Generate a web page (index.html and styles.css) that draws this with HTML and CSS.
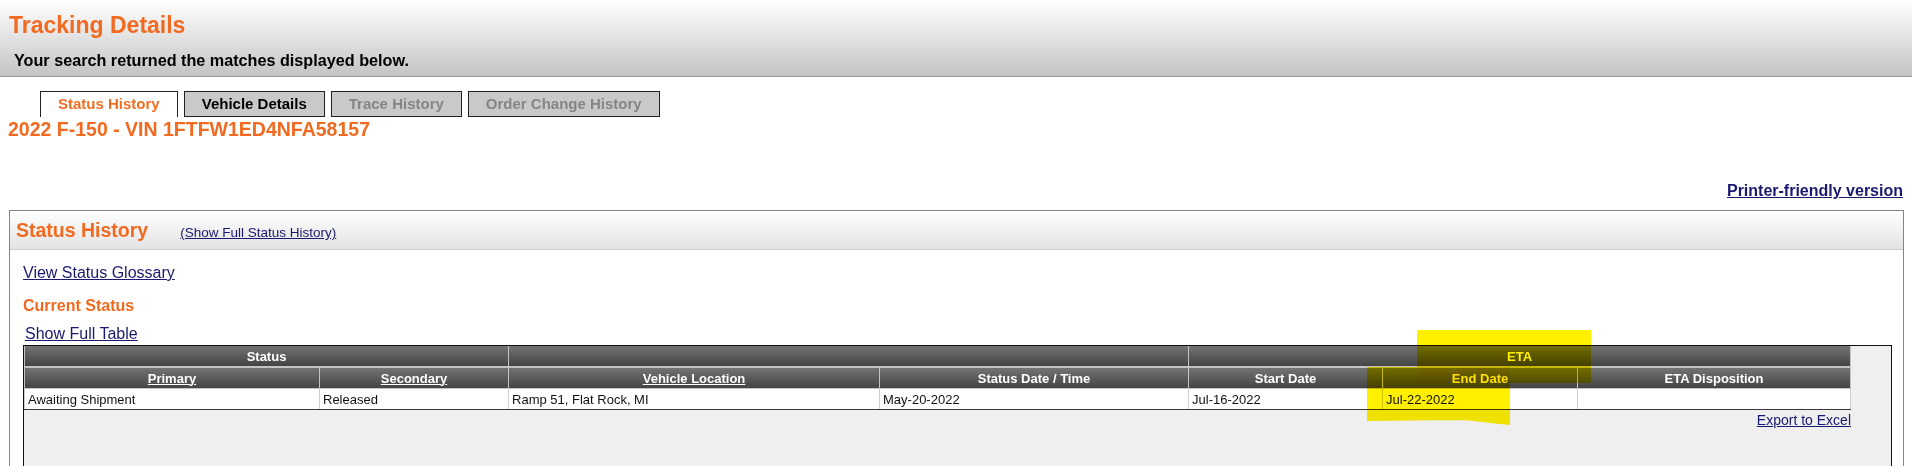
FILE: index.html
```html
<!DOCTYPE html>
<html lang="en">
<head>
<meta charset="UTF-8" />
<title>Tracking Details</title>
<link rel="stylesheet" href="styles.css">
</head>
<body>
<div class="page-head">
<h1 class="page-title">Tracking Details</h1>
<p class="page-sub">Your search returned the matches displayed below.</p>
</div>

<div class="tabs">
<a class="tab tab-active" href="#">Status History</a>
<a class="tab" href="#">Vehicle Details</a>
<a class="tab tab-off" href="#">Trace History</a>
<a class="tab tab-off" href="#">Order Change History</a>
</div>

<h2 class="vin">2022 F-150 - VIN 1FTFW1ED4NFA58157</h2>

<div class="print-row"><a href="#">Printer-friendly version</a></div>

<div class="panel">
<div class="panel-head">
<span class="panel-title">Status History</span>
<a class="panel-link" href="#">(Show Full Status History)</a>
</div>
<div class="panel-body">
<a class="glossary" href="#">View Status Glossary</a>
<h3 class="current">Current Status</h3>
<a class="show-full" href="#">Show Full Table</a>

<div class="grid-wrap">
<table class="status-table">
<colgroup>
<col style="width:295px">
<col style="width:189px">
<col style="width:371px">
<col style="width:309px">
<col style="width:194px">
<col style="width:195px">
<col style="width:273px">
</colgroup>
<thead>
<tr class="group-row">
<th colspan="2">Status</th>
<th colspan="2"></th>
<th colspan="3">ETA</th>
</tr>
<tr class="col-row">
<th><a href="#">Primary</a></th>
<th><a href="#">Secondary</a></th>
<th><a href="#">Vehicle Location</a></th>
<th>Status Date / Time</th>
<th>Start Date</th>
<th>End Date</th>
<th>ETA Disposition</th>
</tr>
</thead>
<tbody>
<tr>
<td>Awaiting Shipment</td>
<td>Released</td>
<td>Ramp 51, Flat Rock, MI</td>
<td>May-20-2022</td>
<td>Jul-16-2022</td>
<td>Jul-22-2022</td>
<td></td>
</tr>
</tbody>
</table>
<div class="export-row"><a href="#">Export to Excel</a></div>

<!-- highlighter marks drawn over the table -->
<div class="mark mark-top"></div>
<div class="mark mark-bottom"></div>
</div>
</div>
</div>
</body>
</html>
```

FILE: styles.css
```css
body {
margin: 0;
background: #fff;
color: #000;
font-family: "Liberation Sans", Arial, sans-serif;
}

a {
color: #191970;
}

.page-head {
height: 76px;
border-bottom: 1px solid #9a9a9a;
background: linear-gradient(#ffffff, #c4c4c4);
}

.page-title {
margin: 0;
padding: 12px 0 0 9px;
font-size: 23px;
line-height: 26px;
color: #f26a1f;
}

.page-sub {
margin: 13px 0 0 14px;
font-size: 16.2px;
line-height: 18px;
font-weight: bold;
}

.tabs {
display: flex;
gap: 6px;
margin-top: 14px;
padding-left: 40px;
}

.tab {
box-sizing: border-box;
height: 26px;
padding: 0 17px;
border: 1px solid #222;
background: #c9c9c9;
color: #000;
font-size: 15px;
font-weight: bold;
line-height: 24px;
text-decoration: none;
}

.tab-active {
background: #fff;
color: #f26f22;
border-bottom: none;
}

.tab-off {
color: #858585;
}

.vin {
margin: 1px 0 0 8px;
font-size: 19.5px;
line-height: 22px;
color: #f26a1f;
}

.print-row {
display: flex;
justify-content: flex-end;
margin-top: 42px;
padding-right: 9px;
font-size: 16px;
line-height: 18px;
font-weight: bold;
}

.panel {
margin: 10px 8px 0 9px;
border: 1px solid #858585;
border-bottom: none;
}

.panel-head {
display: flex;
align-items: baseline;
height: 38px;
padding-left: 6px;
border-bottom: 1px solid #cfcfcf;
background: linear-gradient(#ffffff, #e3e3e3);
line-height: 38px;
}

.panel-title {
font-size: 19.5px;
font-weight: bold;
color: #f26a1f;
}

.panel-link {
margin-left: 32px;
font-size: 13.5px;
}

.panel-body {
display: flex;
flex-direction: column;
align-items: flex-start;
padding: 14px 11px 0 13px;
}

.glossary {
font-size: 16px;
line-height: 18px;
}

.current {
margin: 15px 0 0;
font-size: 16px;
line-height: 18px;
color: #f26a1f;
}

.show-full {
margin: 10px 0 0 2px;
font-size: 16px;
line-height: 18px;
}

.grid-wrap {
position: relative;
align-self: stretch;
min-height: 160px;
margin-top: 2px;
border: 1px solid #111;
background: #efefef;
}

.status-table {
table-layout: fixed;
width: 1827px;
border-collapse: collapse;
font-size: 13px;
}

.status-table th {
padding: 0 3px;
border: 1px solid #c4c4c4;
border-top: none;
background: linear-gradient(#737373, #444444);
color: #fff;
font-weight: bold;
text-align: center;
}

.status-table th a {
color: #fff;
}

.group-row th {
height: 20px;
border-bottom: 2px solid #c4c4c4;
}

.col-row th {
height: 20px;
}

.status-table td {
height: 20px;
padding: 0 3px;
border: 1px solid #cfcfcf;
border-bottom: 1px solid #3a3a3a;
background: #fff;
color: #111;
}

.export-row {
width: 1827px;
margin-top: 2px;
text-align: right;
font-size: 14px;
line-height: 16px;
}

.mark {
position: absolute;
background: #fff000;
mix-blend-mode: multiply;
}

.mark-top {
left: 1393px;
top: -16px;
width: 174px;
height: 53px;
}

.mark-bottom {
left: 1343px;
top: 21px;
width: 143px;
height: 58px;
clip-path: polygon(0 0, 100% 0, 100% 100%, 88% 97%, 70% 92%, 45% 92%, 0 93%);
}
```
